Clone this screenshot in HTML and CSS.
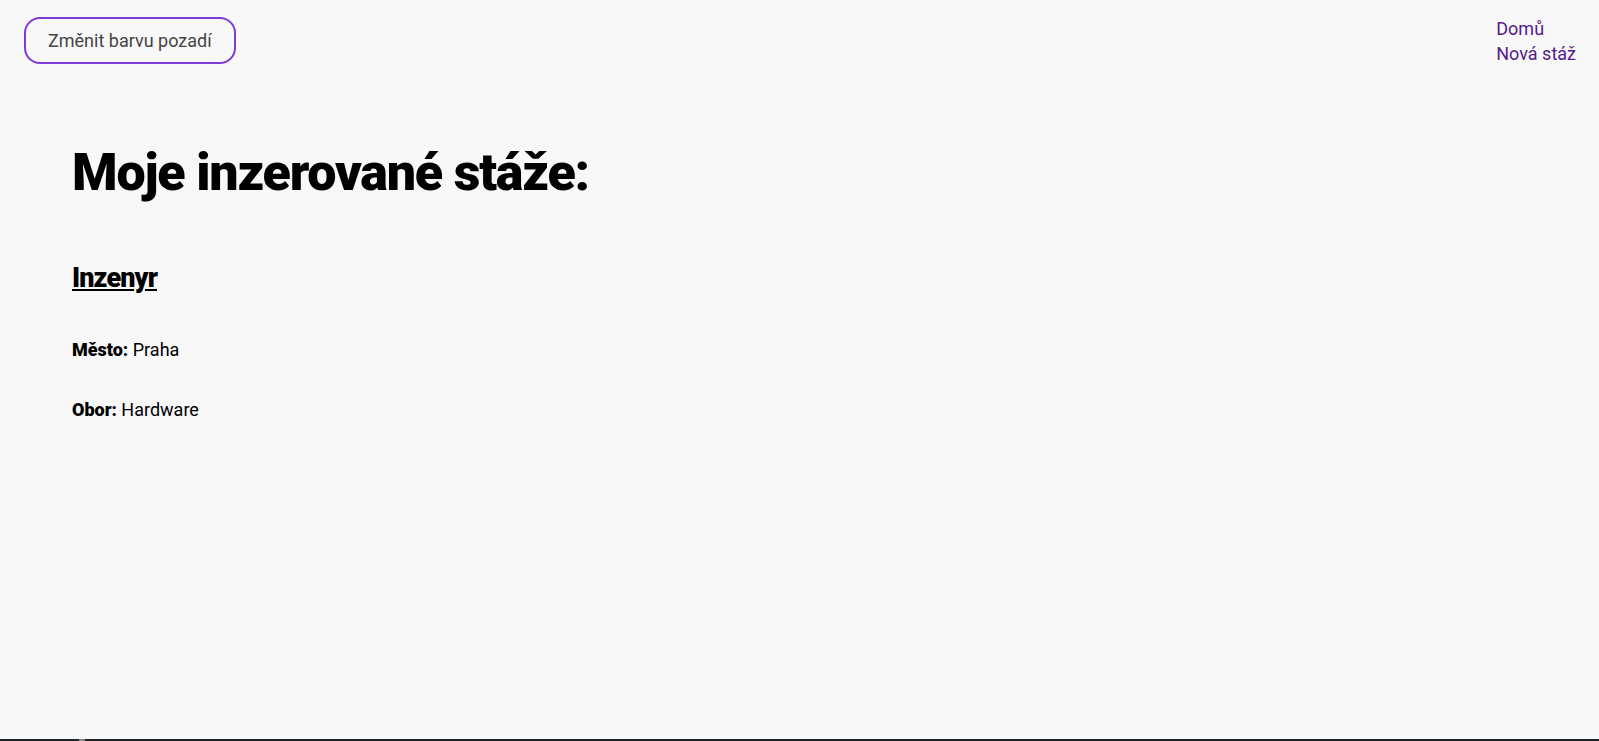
FILE: index.html
```html
<!DOCTYPE html>
<html lang="cs">
<head>
<meta charset="utf-8">
<title>Moje inzerované stáže</title>
<link rel="stylesheet" href="styles.css">
</head>
<body>
<div class="page">
  <header class="topbar">
    <button class="bg-btn" type="button">Změnit barvu pozadí</button>
    <nav class="nav">
      <a href="#" class="nav-link">Domů</a>
      <a href="#" class="nav-link">Nová stáž</a>
    </nav>
  </header>
  <main class="content">
    <h1 class="title">Moje inzerované stáže:</h1>
    <article class="listing">
      <h2 class="listing-title"><a href="#" class="listing-link">Inzenyr</a></h2>
      <p class="field"><strong class="label">Město:</strong> Praha</p>
      <p class="field"><strong class="label">Obor:</strong> Hardware</p>
    </article>
  </main>
  <footer class="footer"><span class="footer-mark"></span></footer>
</div>
</body>
</html>
```
FILE: styles.css
```css
html, body {
  margin: 0;
  padding: 0;
  height: 100%;
}
body {
  background: #f8f8f8;
  font-family: Roboto, "Liberation Sans", sans-serif;
  color: #000;
  font-size: 18px;
}
.page {
  min-height: 100%;
  display: flex;
  flex-direction: column;
}
.topbar {
  display: flex;
  justify-content: space-between;
  align-items: flex-start;
  padding: 17px 23px 0 24px;
}
.bg-btn {
  font-family: Roboto, "Liberation Sans", sans-serif;
  font-size: 18px;
  color: #444;
  background: transparent;
  border: 2px solid #7d3bd8;
  border-radius: 16px;
  height: 47px;
  padding: 0 22px;
  cursor: pointer;
}
.nav {
  display: flex;
  flex-direction: column;
  margin-top: -1px;
  line-height: 25px;
}
.nav-link {
  color: #551a8b;
  text-decoration: none;
  font-size: 18px;
}
.content {
  flex: 1;
  padding: 0 0 0 72px;
}
.title {
  font-size: 52px;
  font-weight: 900;
  margin: 76px 0 0;
  line-height: 1.2;
  letter-spacing: -1.2px;
}
.listing-title {
  font-size: 27px;
  font-weight: 900;
  margin: 58px 0 0;
  letter-spacing: -0.9px;
}
.listing-link {
  color: #000;
  text-decoration: underline;
}
.field {
  margin: 45px 0 0;
  font-size: 18px;
}
.field + .field {
  margin-top: 39px;
}
.label {
  font-weight: 900;
}
.footer {
  height: 2px;
  background: #1f2326;
  position: relative;
}
.footer-mark {
  position: absolute;
  left: 79px;
  top: 0;
  width: 6px;
  height: 2px;
  background: #888;
}
```
